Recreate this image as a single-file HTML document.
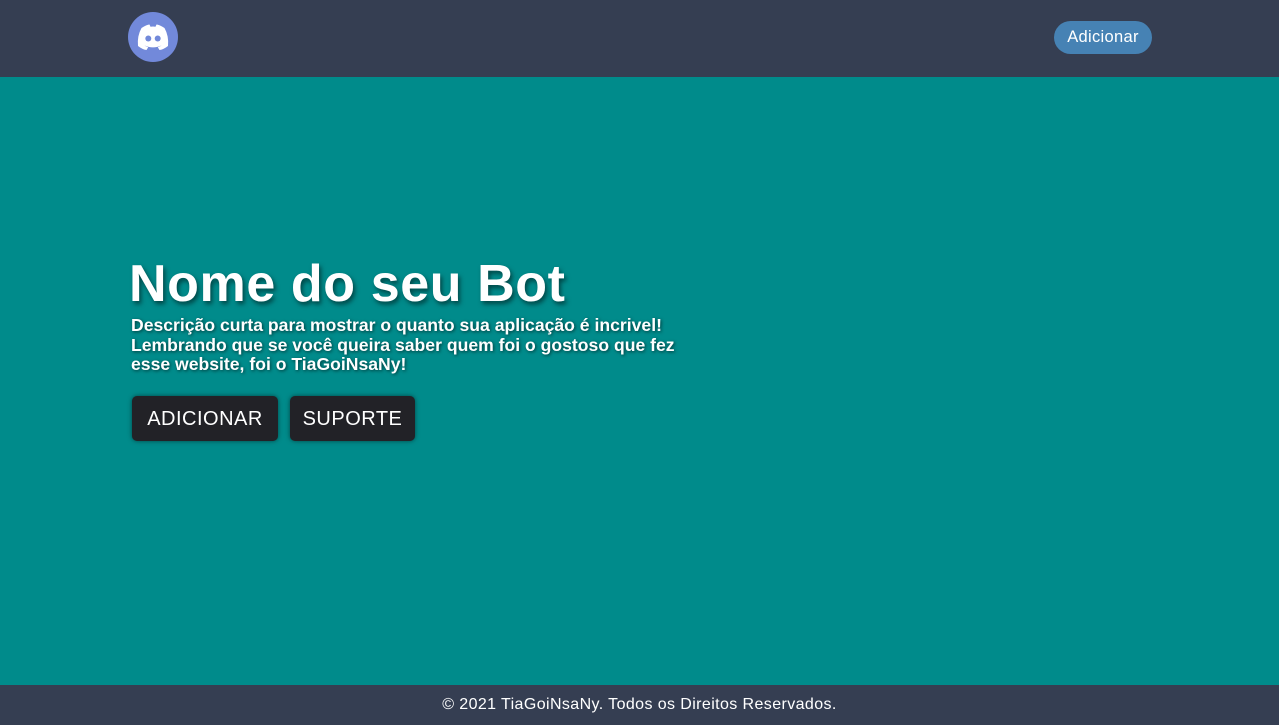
<!DOCTYPE html>
<html><head><meta charset="utf-8"><style>
*{margin:0;padding:0;box-sizing:border-box}
body{width:1279px;height:725px;overflow:hidden;background:#008b8b;font-family:"Liberation Sans",sans-serif;position:relative}
.nav{position:absolute;left:0;top:0;width:1279px;height:77px;background:#353e52}
.logo{position:absolute;left:128px;top:12px;width:50px;height:50px;border-radius:50%;background:#7289da}
.add{position:absolute;left:1054px;top:21px;width:98px;height:33px;border-radius:17px;background:#4682b4;color:#fff;font-size:16.5px;line-height:33px;text-align:center;letter-spacing:0.3px}
h1{position:absolute;left:129px;top:254px;font-size:52px;font-weight:bold;color:#fff;text-shadow:2px 3px 5px rgba(0,0,0,.5);letter-spacing:0.6px;white-space:nowrap}
.desc{position:absolute;left:131px;top:316px;width:620px;font-size:17.6px;font-weight:bold;color:#fff;line-height:19.5px;text-shadow:1px 1px 3px rgba(0,0,0,.6);white-space:nowrap}
.btn{position:absolute;top:396px;height:45px;background:#222227;color:#fff;border-radius:5px;font-size:20px;line-height:46px;text-align:center;box-shadow:0 0 5px rgba(0,0,0,.5);letter-spacing:0.5px}
.foot{position:absolute;left:0;top:685px;width:1279px;height:40px;background:#353e52;color:#fff;font-size:16px;text-align:center;line-height:40px;letter-spacing:0.4px}
</style></head><body>
<div class="nav">
<div class="logo"><svg width="50" height="50" viewBox="0 0 50 50"><path d="M13.5 16 Q19 12.5 21.5 12.5 L22.5 14.8 Q25 14.3 27.5 14.8 L28.5 12.5 Q31 12.5 36.5 16 Q41 24 40 34 Q35.5 37.5 31.5 38 L29.8 35.2 Q32.5 34.2 33.8 33.2 Q25 37.5 16.2 33.2 Q17.5 34.2 20.2 35.2 L18.5 38 Q14.5 37.5 10 34 Q9 24 13.5 16Z" fill="#fff"/><circle cx="20.3" cy="26.5" r="3" fill="#7289da"/><circle cx="29.7" cy="26.5" r="3" fill="#7289da"/></svg></div>
<div class="add">Adicionar</div>
</div>
<h1>Nome do seu Bot</h1>
<div class="desc">Descrição curta para mostrar o quanto sua aplicação é incrivel!<br>Lembrando que se você queira saber quem foi o gostoso que fez<br>esse website, foi o TiaGoiNsaNy!</div>
<div class="btn" style="left:132px;width:146px">ADICIONAR</div>
<div class="btn" style="left:290px;width:125px">SUPORTE</div>
<div class="foot">© 2021 TiaGoiNsaNy. Todos os Direitos Reservados.</div>
</body></html>
